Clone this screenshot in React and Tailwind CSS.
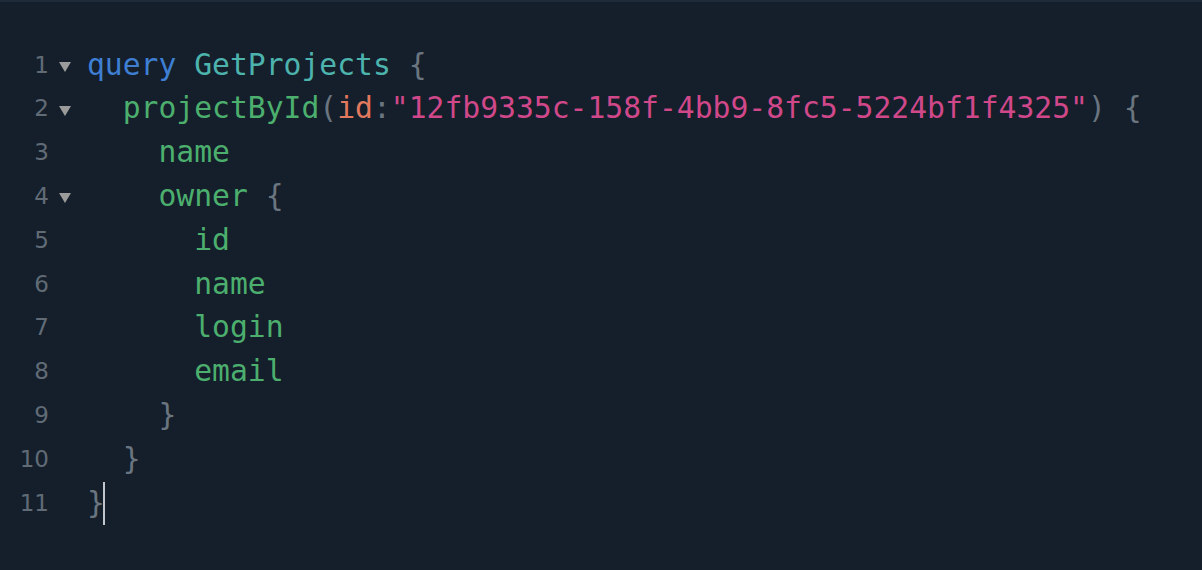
import React from "react";

const C = {
  kw: "text-[#3e7fd3]",
  def: "text-[#4db3ad]",
  field: "text-[#4caf6e]",
  arg: "text-[#e2795e]",
  str: "text-[#d0488a]",
  punc: "text-[#6a7580]",
};

const lines = [
  { fold: true, parts: [["query", C.kw], [" "], ["GetProjects", C.def], [" "], ["{", C.punc]] },
  {
    fold: true,
    parts: [
      ["  "],
      ["projectById", C.field],
      ["(", C.punc],
      ["id", C.arg],
      [":", C.punc],
      ['"12fb9335c-158f-4bb9-8fc5-5224bf1f4325"', C.str],
      [")", C.punc],
      [" "],
      ["{", C.punc],
    ],
  },
  { parts: [["    "], ["name", C.field]] },
  { fold: true, parts: [["    "], ["owner", C.field], [" "], ["{", C.punc]] },
  { parts: [["      "], ["id", C.field]] },
  { parts: [["      "], ["name", C.field]] },
  { parts: [["      "], ["login", C.field]] },
  { parts: [["      "], ["email", C.field]] },
  { parts: [["    "], ["}", C.punc]] },
  { parts: [["  "], ["}", C.punc]] },
  { parts: [["}", C.punc]], cursor: true },
];

const App = () => {
  return (
    <div className="w-[1202px] h-[570px] bg-[#141f2b] border-t-2 border-[#1f2b39] overflow-hidden">
      <div className="pt-[41px] font-['DejaVu_Sans_Mono',monospace]">
        {lines.map((line, i) => (
          <div key={i} className="flex items-center h-[43.8px]">
            <div className="w-[50px] pr-[1px] text-right text-[23px] text-[#606b76] font-['DejaVu_Sans',sans-serif]">
              {i + 1}
            </div>
            <div className="w-[37px] flex justify-center pr-[8px]">
              {line.fold && (
                <svg width="12" height="10" viewBox="0 0 12 10" className="mt-[4px]">
                  <path d="M0 0 H12 L6 10 Z" fill="#9b9b9b" />
                </svg>
              )}
            </div>
            <div className="relative whitespace-pre text-[29.7px]">
              {line.parts.map(([t, cls], j) => (
                <span key={j} className={cls}>
                  {t}
                </span>
              ))}
              {line.cursor && (
                <span className="absolute top-[1px] left-[16px] w-[2px] h-[43px] bg-[#c0c6cc]" />
              )}
            </div>
          </div>
        ))}
      </div>
    </div>
  );
};

export default App;
